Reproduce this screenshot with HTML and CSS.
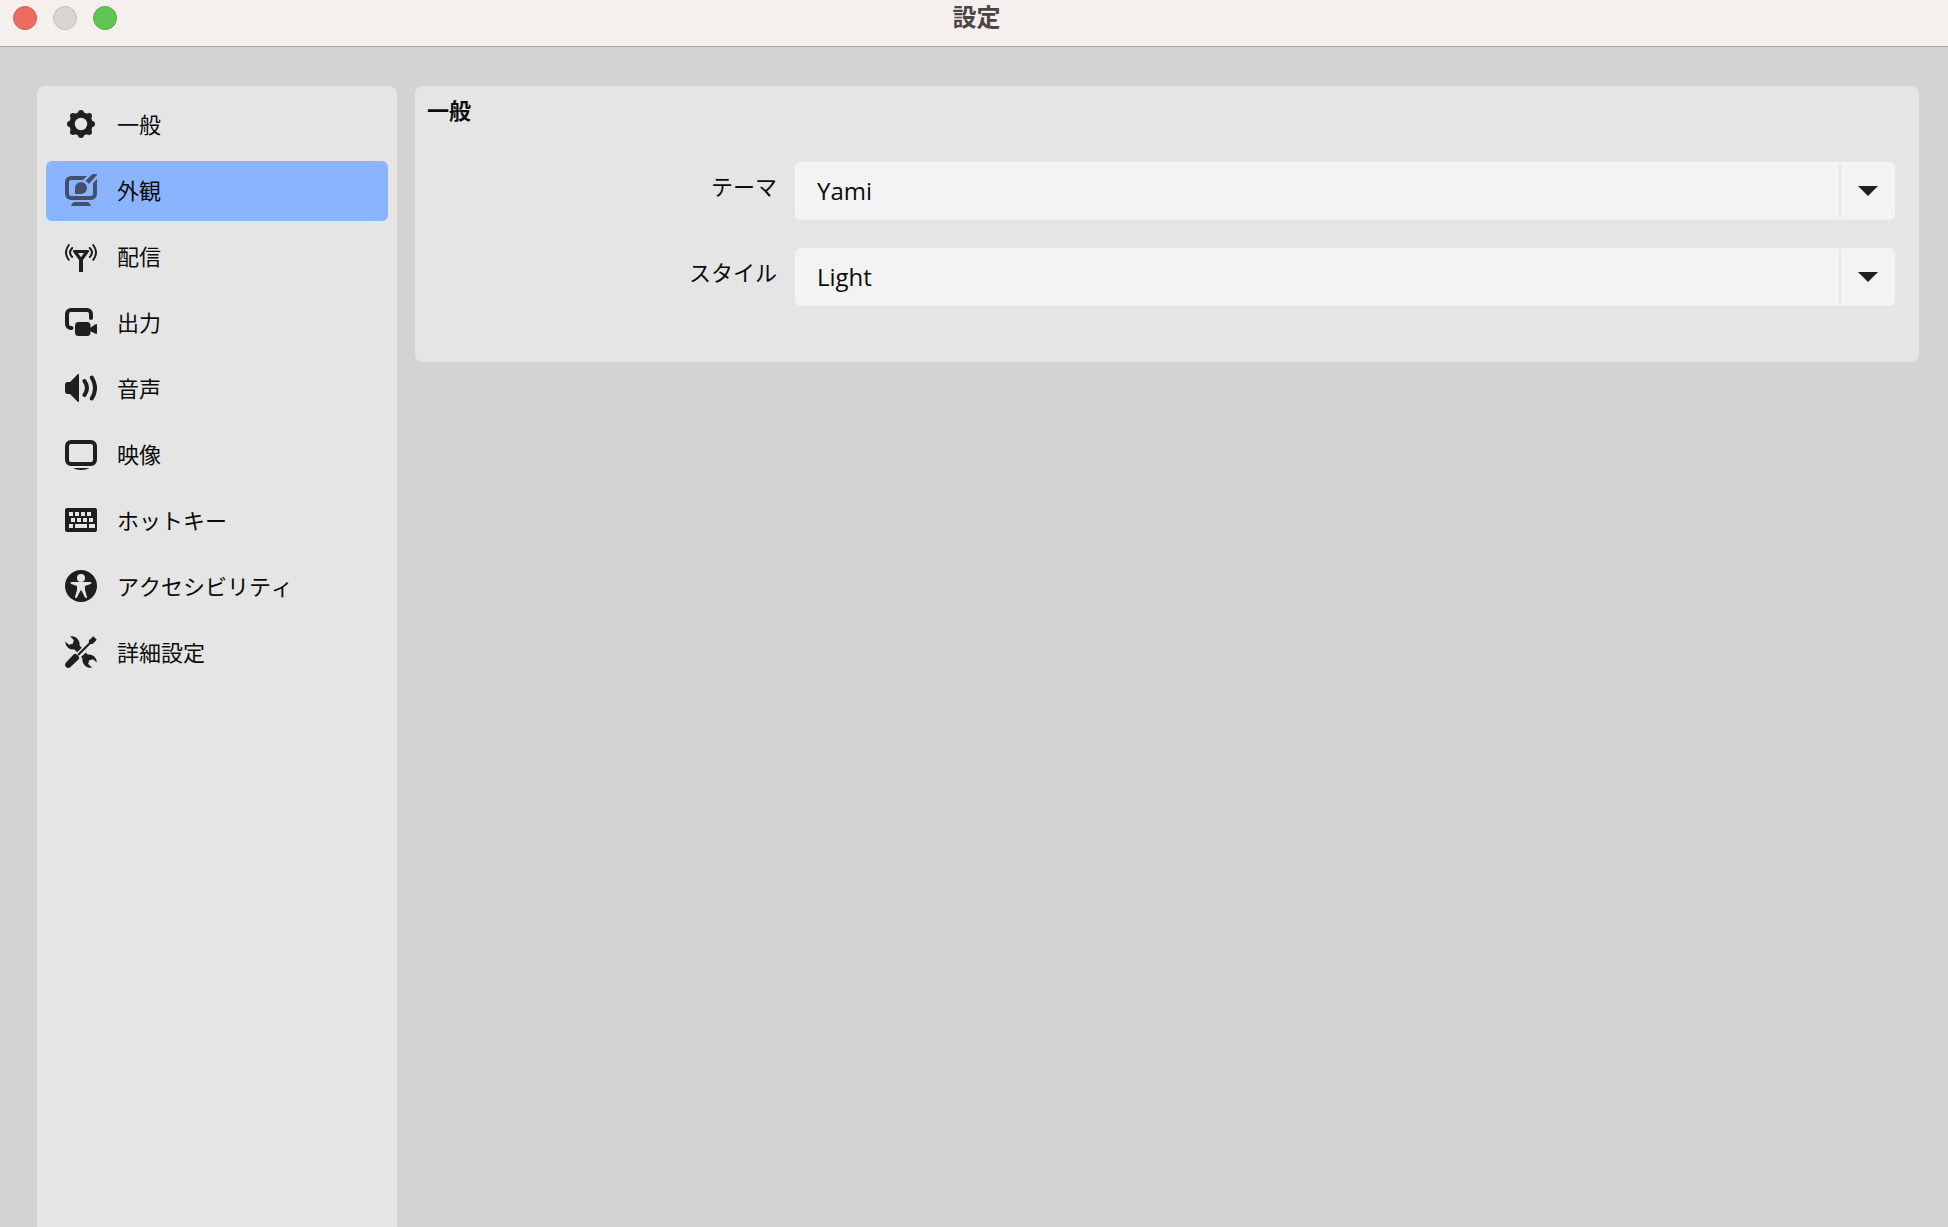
FILE: index.html
```html
<!DOCTYPE html>
<html lang="ja">
<head>
<meta charset="utf-8">
<meta name="viewport" content="width=device-width, initial-scale=1">
<title>設定</title>
<link rel="stylesheet" href="styles.css">
</head>
<body>
<header class="titlebar">
  <div class="lights">
    <button class="light light-close" type="button" aria-label="閉じる"></button>
    <button class="light light-min" type="button" aria-label="最小化" disabled></button>
    <button class="light light-zoom" type="button" aria-label="拡大"></button>
  </div>
  <h1 class="title">設定</h1>
</header>

<div class="window">
  <nav class="sidebar">
    <a class="item" href="#general">
      <svg class="icon" viewBox="0 0 32 32" aria-hidden="true">
        <circle cx="16" cy="16" r="9" fill="none" stroke="currentColor" stroke-width="5.6"/>
        <circle cx="16" cy="5" r="3"/><circle cx="16" cy="27" r="3"/><circle cx="5" cy="16" r="3"/><circle cx="27" cy="16" r="3"/>
        <circle cx="8" cy="8" r="3"/><circle cx="24" cy="8" r="3"/><circle cx="8" cy="24" r="3"/><circle cx="24" cy="24" r="3"/>
      </svg>
      <span>一般</span>
    </a>
    <a class="item item-active" href="#appearance" aria-current="page">
      <svg class="icon" viewBox="0 0 32 32" aria-hidden="true">
        <path d="M22 2H6a6 6 0 0 0-6 6v12a6 6 0 0 0 6 6h20a6 6 0 0 0 6-6V5l-4 4v11a2 2 0 0 1-2 2H6a2 2 0 0 1-2-2V8a2 2 0 0 1 2-2h12z"/>
        <path d="M10 20v-6a6 6 0 1 1 6 6z"/>
        <path d="M20.400 7L26 1.200Q27.200 0 29 0h3v1L23.800 10Q22.800 8 20.400 7z"/>
        <path d="M10 28h12q2.500 0 4 4H6q1.500-4 4-4z"/>
      </svg>
      <span>外観</span>
    </a>
    <a class="item" href="#stream">
      <svg class="icon" viewBox="0 0 32 32" aria-hidden="true">
        <path fill-rule="evenodd" d="M9.500 10h13q2.500 0 1.300 2L18 20v12h-4V20l-5.800-8Q7 10 9.500 10zM13 13l3 4.200 3-4.200z"/>
        <g fill="none" stroke="currentColor" stroke-width="2" stroke-linecap="round">
          <path d="M7.200 8Q2.800 12.500 7.200 17M3.800 5Q-1.800 12.500 3.800 19.800M24.800 8q4.400 4.500 0 9M28.200 5q5.600 7.500 0 14.800"/>
        </g>
      </svg>
      <span>配信</span>
    </a>
    <a class="item" href="#output">
      <svg class="icon" viewBox="0 0 32 32" aria-hidden="true">
        <path fill="none" stroke="currentColor" stroke-width="4" stroke-linecap="round" d="M6.500 22H6a4 4 0 0 1-4-4V8a4 4 0 0 1 4-4h16a4 4 0 0 1 4 4v4"/>
        <rect x="10" y="16" width="15.500" height="14" rx="3.500"/>
        <path d="M25 22l5-3.500q2-1.200 2 .5v8q0 1.700-2 .5L25 25z"/>
      </svg>
      <span>出力</span>
    </a>
    <a class="item" href="#audio">
      <svg class="icon" viewBox="0 0 32 32" aria-hidden="true">
        <path d="M2.500 10H5l7.500-7.500Q14 1 14 3v26q0 2-1.500.5L5 22H2.500Q0 22 0 19v-6q0-3 2.500-3z"/>
        <path fill="none" stroke="currentColor" stroke-width="4" stroke-linecap="round" d="M19.500 9q5 7 0 14M26.800 5.500q6.500 10.500 0 21"/>
      </svg>
      <span>音声</span>
    </a>
    <a class="item" href="#video">
      <svg class="icon" viewBox="0 0 32 32" aria-hidden="true">
        <rect x="2" y="4" width="28" height="22" rx="4" fill="none" stroke="currentColor" stroke-width="4"/>
        <path d="M8 30h16.500q-3 2-8.300 2T8 30z"/>
      </svg>
      <span>映像</span>
    </a>
    <a class="item" href="#hotkeys">
      <svg class="icon" viewBox="0 0 32 32" aria-hidden="true">
        <path fill-rule="evenodd" d="M2 4h28a2 2 0 0 1 2 2v20a2 2 0 0 1-2 2H2a2 2 0 0 1-2-2V6a2 2 0 0 1 2-2zM4 8v4h4V8zM10 8v4h4V8zM16 8v4h4V8zM22 8v4h4V8zM6 14v4h4v-4zM12 14v4h4v-4zM18 14v4h4v-4zM24 14v4h4v-4zM4 20v4h4v-4zM10 20v4h12v-4zM24 20v4h6v-4z"/>
      </svg>
      <span>ホットキー</span>
    </a>
    <a class="item" href="#accessibility">
      <svg class="icon" viewBox="0 0 32 32" aria-hidden="true">
        <circle cx="16" cy="16" r="16"/>
        <g class="cutout">
          <circle cx="16" cy="8" r="4"/>
          <path d="M7 12h18q1.500 0 1.500 1t-1.500 1.300L20 16v4l2 7q.2 1-.8 1t-1.400-1L16.500 20.500h-1L12.200 27q-.4 1-1.400 1t-.8-1l2-7v-4l-5-1.700Q5.500 14 5.500 13T7 12z"/>
        </g>
      </svg>
      <span>アクセシビリティ</span>
    </a>
    <a class="item" href="#advanced">
      <svg class="icon" viewBox="0 0 32 32" aria-hidden="true">
        <path d="M5 .4A8 8 0 0 1 14.500 9.500l3 3-4.500 4.500-3.500-3.500A8 8 0 0 1 .2 5.500L4 8.700l3.800-1 1-3.700z"/>
        <path d="M27 31.600A8 8 0 0 1 17.500 22.500l-1.500-1.500 5-4.500 1.500 2a8 8 0 0 1 9.300 8L28 23.300l-3.800 1-1 3.700z"/>
        <path class="separator" d="M10 22L25 7" />
        <path d="M23.800 4.500L28.300.2l3.500 3.500-4.200 4.400-2-.1L13.800 19.800l-1.500-1.500L24 6.600z"/>
        <path d="M8.500 18.500q1.800-1.500 3.500.2l1.300 1.300q1.700 1.700.2 3.500L5.500 31q-2.500 2-4.500 0t0-4.500z"/>
      </svg>
      <span>詳細設定</span>
    </a>
  </nav>

  <main class="content">
    <section class="group" aria-labelledby="group-title">
      <h2 class="group-title" id="group-title">一般</h2>
      <div class="form">
        <label class="label" for="theme">テーマ</label>
        <div class="combo">
          <select class="select" id="theme"><option>Yami</option></select>
          <span class="arrow"><svg class="caret" viewBox="0 0 20 10" aria-hidden="true"><path d="M0 0h20L10 10z"/></svg></span>
        </div>
        <label class="label" for="style">スタイル</label>
        <div class="combo">
          <select class="select" id="style"><option>Light</option></select>
          <span class="arrow"><svg class="caret" viewBox="0 0 20 10" aria-hidden="true"><path d="M0 0h20L10 10z"/></svg></span>
        </div>
      </div>
    </section>
  </main>
</div>
</body>
</html>
```
FILE: styles.css
```css
* {
  box-sizing: border-box;
}

body {
  display: flex;
  flex-direction: column;
  min-height: 100vh;
  margin: 0;
  background: #d3d3d3;
  color: #0c0c0c;
  font-family: "Open Sans", "Noto Sans CJK JP", sans-serif;
  font-size: 22px;
  font-kerning: none;
  line-height: 32px;
}

.titlebar {
  display: grid;
  grid-template-columns: 1fr auto 1fr;
  align-items: start;
  height: 47px;
  padding: 0 8px 0 13px;
  border-bottom: 1px solid #aaa5a1;
  background: #f5f0ed;
}

.lights {
  display: flex;
  gap: 16px;
  padding-top: 6px;
}

.light {
  width: 24px;
  height: 24px;
  padding: 0;
  border: 1px solid #d95a4e;
  border-radius: 50%;
  background: #ed6b5f;
}

.light-min {
  border-color: #c5c0bd;
  background: #dad5d2;
}

.light-zoom {
  border-color: #52ae42;
  background: #61c554;
}

.title {
  margin: 0;
  color: #4b4644;
  font-size: 24px;
  font-weight: 700;
  line-height: 34px;
}

.window {
  display: flex;
  flex: 1;
  gap: 18px;
  padding: 39px 29px 0 37px;
}

.sidebar {
  display: flex;
  flex: none;
  flex-direction: column;
  gap: 6px;
  width: 360px;
  padding: 9px;
  border-radius: 8px 8px 0 0;
  background: #e5e5e5;
}

.item {
  display: flex;
  align-items: center;
  gap: 20px;
  height: 60px;
  padding: 0 19px 2px;
  border-radius: 6px;
  color: inherit;
  text-decoration: none;
}

.item-active {
  background: #8bb4ff;
}

.icon {
  flex: none;
  width: 32px;
  height: 32px;
  color: #1f1f1f;
  fill: currentColor;
}

.item-active .icon {
  color: #44506b;
}

.cutout {
  fill: #e5e5e5;
}

.separator {
  fill: none;
  stroke: #e5e5e5;
  stroke-width: 5;
}

.content {
  flex: 1;
  min-width: 0;
}

.group {
  padding: 8px 24px 56px 12px;
  border-radius: 8px;
  background: #e5e5e5;
}

.group-title {
  margin: 0 0 36px;
  font-size: 22px;
  font-weight: 700;
  line-height: 32px;
}

.form {
  display: grid;
  grid-template-columns: 350px 1fr;
  gap: 28px 18px;
}

.label {
  padding-top: 8px;
  text-align: right;
}

.combo {
  display: grid;
  grid-template-columns: 1fr 56px;
  height: 58px;
  border-radius: 6px;
  background: #f3f3f3;
}

.select {
  grid-area: 1 / 1 / 2 / 3;
  padding: 0 78px 0 22px;
  border: 0;
  border-radius: 6px;
  appearance: none;
  background: transparent;
  color: inherit;
  font: inherit;
  font-size: 24px;
  font-kerning: auto;
}

.arrow {
  display: flex;
  grid-area: 1 / 2 / 2 / 3;
  align-items: center;
  justify-content: center;
  margin: 2px 0;
  border-left: 2px solid #e5e5e5;
  pointer-events: none;
}

.caret {
  width: 20px;
  height: 10px;
  fill: #1f1f1f;
}
```
